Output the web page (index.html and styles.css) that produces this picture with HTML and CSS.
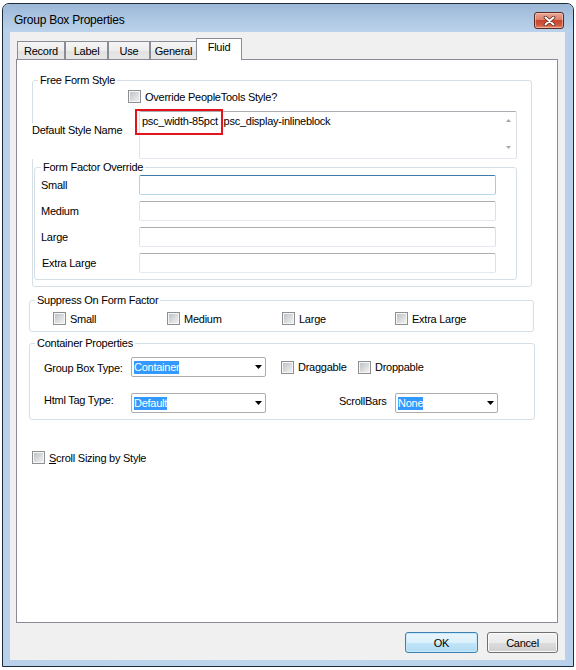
FILE: index.html
```html
<!DOCTYPE html>
<html lang="en">

<head>
    <meta charset="UTF-8">
    <meta name="viewport" content="width=device-width, initial-scale=1.0">
    <title>Group Box Properties</title>
    <link rel="stylesheet" href="styles.css">
</head>

<body>
    <div class="window">
        <div class="titlebar">
            <span class="title">Group Box Properties</span>
            <button class="close">
                <svg width="13" height="10" viewBox="0 0 13 10">
                    <path d="M2.5 1.5 L10.5 8.5 M10.5 1.5 L2.5 8.5" stroke="#5a2418" stroke-width="3.6" stroke-linecap="round" fill="none" />
                    <path d="M2.5 1.5 L10.5 8.5 M10.5 1.5 L2.5 8.5" stroke="#fff" stroke-width="2" stroke-linecap="round" fill="none" />
                </svg>
            </button>
        </div>
        <div class="frame">
            <div class="client">
                <div class="tabs">
                    <span class="tab tab-record">Record</span>
                    <span class="tab tab-label">Label</span>
                    <span class="tab tab-use">Use</span>
                    <span class="tab tab-general">General</span>
                    <span class="tab tab-fluid active">Fluid</span>
                </div>
                <div class="panel">
                    <div class="group free-form">
                        <span class="group-title">Free Form Style</span>
                        <label class="check override"><span class="box"></span>Override PeopleTools Style?</label>
                        <div class="style-row">
                            <span class="style-label">Default Style Name</span>
                            <div class="textbox">
                                <div class="textbox-text"><span class="marked">psc_width-85pct</span> psc_display-inlineblock</div>
                                <div class="vscroll">
                                    <svg width="5" height="3" viewBox="0 0 5 3"><path d="M2.5 0L5 3H0z" fill="#a6a6a6" /></svg>
                                    <svg width="5" height="3" viewBox="0 0 5 3"><path d="M0 0H5L2.5 3z" fill="#a6a6a6" /></svg>
                                </div>
                            </div>
                        </div>
                        <div class="group form-factor">
                            <span class="group-title">Form Factor Override</span>
                            <div class="field-row"><span class="field-label">Small</span><span class="input focused"></span></div>
                            <div class="field-row"><span class="field-label">Medium</span><span class="input"></span></div>
                            <div class="field-row"><span class="field-label">Large</span><span class="input"></span></div>
                            <div class="field-row"><span class="field-label extra">Extra Large</span><span class="input"></span></div>
                        </div>
                    </div>

                    <div class="group suppress">
                        <span class="group-title">Suppress On Form Factor</span>
                        <div class="suppress-row">
                            <label class="check"><span class="box"></span>Small</label>
                            <label class="check"><span class="box"></span>Medium</label>
                            <label class="check"><span class="box"></span>Large</label>
                            <label class="check"><span class="box"></span>Extra Large</label>
                        </div>
                    </div>

                    <div class="group container-props">
                        <span class="group-title">Container Properties</span>
                        <div class="prop-row first">
                            <span class="prop-label">Group Box Type:</span>
                            <div class="select type-select">
                                <span class="value">Container</span>
                                <svg class="arrow" width="7" height="4" viewBox="0 0 7 4"><path d="M0 0H7L3.5 4z" fill="#000" /></svg>
                            </div>
                            <label class="check draggable"><span class="box"></span>Draggable</label>
                            <label class="check"><span class="box"></span>Droppable</label>
                        </div>
                        <div class="prop-row second">
                            <span class="prop-label">Html Tag Type:</span>
                            <div class="select type-select">
                                <span class="value">Default</span>
                                <svg class="arrow" width="7" height="4" viewBox="0 0 7 4"><path d="M0 0H7L3.5 4z" fill="#000" /></svg>
                            </div>
                            <span class="scroll-label">ScrollBars</span>
                            <div class="select scroll-select">
                                <span class="value">None</span>
                                <svg class="arrow" width="7" height="4" viewBox="0 0 7 4"><path d="M0 0H7L3.5 4z" fill="#000" /></svg>
                            </div>
                        </div>
                    </div>

                    <label class="check scroll-sizing"><span class="box"></span><span><u>S</u>croll Sizing by Style</span></label>
                </div>
                <div class="buttons">
                    <button class="btn default">OK</button>
                    <button class="btn">Cancel</button>
                </div>
            </div>
        </div>
    </div>
</body>

</html>
```

FILE: styles.css
```css
body {
    margin: 0;
    background: #fff;
    font: 11px/14px "Liberation Sans", Arial, sans-serif;
    letter-spacing: -0.25px;
    color: #000;
}

/* window chrome */
.window {
    display: flex;
    flex-direction: column;
    box-sizing: border-box;
    width: 572px;
    height: 664px;
    margin: 3px 0 0 2px;
    border: 1px solid #1d2c3b;
    border-radius: 7px 7px 0 0;
    overflow: hidden;
    background: #bcd4ec;
}

.titlebar {
    display: flex;
    align-items: flex-start;
    height: 28px;
    padding-left: 11px;
    background: linear-gradient(#9cb8d7, #afc8e4 60%, #bad2eb);
}

.title {
    margin-top: 9px;
    font-size: 12px;
    line-height: 14px;
}

.close {
    display: flex;
    align-items: center;
    justify-content: center;
    box-sizing: border-box;
    width: 30px;
    height: 17px;
    margin: 8px 9px 0 auto;
    padding: 0;
    border: 1px solid #5b2a24;
    border-radius: 3px;
    background: linear-gradient(#e9a898, #dc806b 45%, #c7452c 50%, #cf5a3f 80%, #df8a70);
    box-shadow: inset 0 0 0 1px rgba(255, 220, 210, 0.5);
}

.frame {
    flex: 1;
    padding: 0 8px 6px 7px;
    background: linear-gradient(90deg, #b8d0e9, #bdd5ed 50%, #b8d0e9);
}

.client {
    box-sizing: border-box;
    height: 628px;
    padding: 6px 7px 0 6px;
    background: #f0f0f0;
}

/* tab strip */
.tabs {
    display: flex;
    align-items: flex-end;
    height: 21px;
    margin-left: 1px;
}

.tab {
    box-sizing: border-box;
    height: 18px;
    padding-top: 2px;
    border: 1px solid #898c95;
    border-bottom: 0;
    text-align: center;
    background: linear-gradient(#f5f5f5, #ededed 50%, #e1e1e1 51%, #e7e7e7);
}

.tab-record { width: 48px; }
.tab-label { width: 43px; }
.tab-use { width: 42px; }
.tab-general { width: 47px; }
.tab-fluid { width: 46px; }

.tab.active {
    position: relative;
    z-index: 1;
    height: 22px;
    margin: 0 0 -1px -1px;
    padding-top: 1px;
    background: #fff;
}

.panel {
    box-sizing: border-box;
    height: 564px;
    padding-top: 20px;
    border: 1px solid #898c95;
    background: #fff;
}

/* group boxes */
.group {
    box-sizing: border-box;
    border: 1px solid #d5dfe5;
    border-radius: 3px;
}

.group-title {
    display: block;
    width: fit-content;
    height: 14px;
    margin: -8px 0 0 5px;
    padding: 0 2px;
    background: #fff;
}

.free-form {
    width: 500px;
    margin-left: 15px;
}

.check {
    display: flex;
    align-items: center;
    gap: 4px;
    height: 13px;
    white-space: nowrap;
}

.box {
    flex: none;
    box-sizing: border-box;
    width: 13px;
    height: 13px;
    padding: 1px;
    border: 1px solid #8e8f8f;
    background: linear-gradient(135deg, #bfc3c8, #f0f0f0) content-box, #f6f6f6;
}

.override {
    margin: 3px 0 0 95px;
}

.style-row {
    display: flex;
    margin-top: 8px;
}

.style-label {
    width: 107px;
    margin: 12px 0 0 -1px;
    background: #fff;
}

.textbox {
    display: flex;
    box-sizing: border-box;
    width: 378px;
    height: 48px;
    padding: 2px 0 0 2px;
    border: 1px solid;
    border-color: #abadb3 #dbdfe6 #e3e9ef #e2e3ea;
    border-radius: 2px;
}

.textbox-text {
    flex: 1;
}

.marked {
    position: relative;
    display: inline-block;
    margin-right: 3px;
}

/* red call-out drawn round the first class name */
.marked::after {
    content: "";
    position: absolute;
    left: -7px;
    top: -5px;
    box-sizing: border-box;
    width: 88px;
    height: 26px;
    border: 2px solid #e3141c;
}

.vscroll {
    display: flex;
    flex-direction: column;
    align-items: center;
    justify-content: space-between;
    width: 16px;
    padding: 5px 0 9px;
    box-sizing: border-box;
}

.vscroll svg {
    display: block;
}

.form-factor {
    width: 483px;
    margin: 8px 0 6px 1px;
    padding-bottom: 6px;
}

.form-factor .group-title {
    margin-left: 6px;
}

.field-row {
    display: flex;
    align-items: center;
    height: 20px;
    margin-top: 6px;
    padding-left: 6px;
}

.form-factor .group-title + .field-row {
    margin-top: 1px;
}

.field-label {
    width: 98px;
}

.field-label.extra {
    margin-left: 1px;
    width: 97px;
}

.input {
    display: block;
    box-sizing: border-box;
    width: 357px;
    height: 20px;
    border: 1px solid;
    border-color: #abadb3 #dbdfe6 #e3e9ef #e2e3ea;
    border-radius: 2px;
    background: #fff;
}

.input.focused {
    border-color: #3d7bad #a4c9e3 #b7d9ed #b5cfe7;
}

.suppress {
    width: 505px;
    margin: 13px 0 0 12px;
    padding-bottom: 6px;
}

.suppress-row {
    display: grid;
    grid-template-columns: 114px 115px 113px auto;
    margin-top: 5px;
    padding-left: 23px;
}

.container-props {
    width: 506px;
    margin: 11px 0 0 12px;
    padding-bottom: 6px;
}

.prop-row {
    display: flex;
    height: 20px;
    padding-left: 14px;
}

.prop-row.first {
    align-items: center;
    margin-top: 7px;
}

.prop-row.second {
    align-items: flex-start;
    margin-top: 16px;
}

.prop-label {
    width: 87px;
}

.prop-row.first .prop-label {
    margin-top: 2px;
}

.select {
    display: flex;
    align-items: center;
    box-sizing: border-box;
    height: 20px;
    padding: 0 3px 0 2px;
    border: 1px solid #acacac;
    border-radius: 2px;
    background: #fff;
}

.type-select {
    width: 135px;
}

.scroll-select {
    width: 103px;
}

.select .value {
    line-height: 13px;
    color: #fff;
    background: #3399ff;
}

.select .arrow {
    margin-left: auto;
}

.draggable {
    width: 77px;
    margin-left: 15px;
}

.scroll-label {
    width: 56px;
    margin: 1px 0 0 73px;
}

.scroll-sizing {
    margin: 31px 0 0 15px;
}

/* dialog buttons */
.buttons {
    display: flex;
    justify-content: flex-end;
    gap: 9px;
    margin-top: 9px;
}

.btn {
    box-sizing: border-box;
    width: 71px;
    height: 21px;
    padding: 0;
    border: 1px solid #707070;
    border-radius: 3px;
    font: inherit;
    letter-spacing: inherit;
    color: #000;
    background: linear-gradient(#f2f2f2, #ebebeb 50%, #dddddd 50%, #cfcfcf);
    box-shadow: inset 0 0 0 1px #fbfbfb;
}

.btn.default {
    width: 73px;
    border-color: #3c7fb1;
    background: linear-gradient(#e8f5fc, #dcf0fb 50%, #c2e5f8 50%, #b0dbf3);
    box-shadow: inset 0 0 0 1px #c6e9fb;
}
```
